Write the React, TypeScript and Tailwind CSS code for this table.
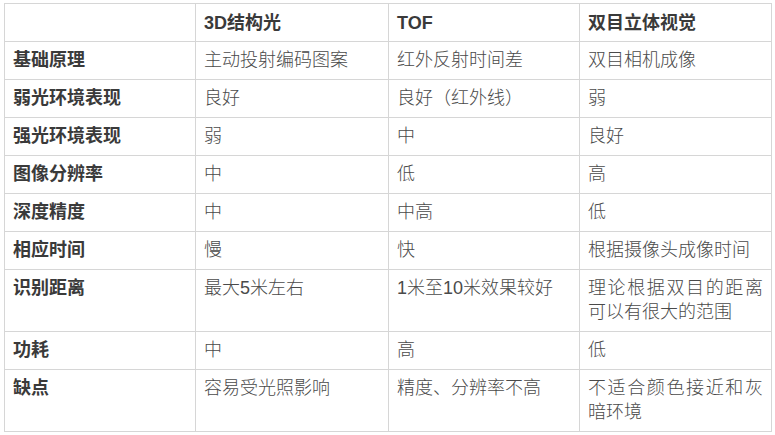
import React from "react";

const rows: [string, string, string, string][] = [
  ["基础原理", "主动投射编码图案", "红外反射时间差", "双目相机成像"],
  ["弱光环境表现", "良好", "良好（红外线）", "弱"],
  ["强光环境表现", "弱", "中", "良好"],
  ["图像分辨率", "中", "低", "高"],
  ["深度精度", "中", "中高", "低"],
  ["相应时间", "慢", "快", "根据摄像头成像时间"],
  ["识别距离", "最大5米左右", "1米至10米效果较好", "理论根据双目的距离可以有很大的范围"],
  ["功耗", "中", "高", "低"],
  ["缺点", "容易受光照影响", "精度、分辨率不高", "不适合颜色接近和灰暗环境"],
];

export default function App() {
  return (
    <div
      className="bg-white pt-[3px] pl-[4px] w-[775px] h-[435px]"
      style={{ fontFamily: '"Liberation Sans", "Noto Sans CJK SC", sans-serif' }}
    >
      <table className="table-fixed border-collapse w-[767px] text-[18px] leading-[24px]">
        <colgroup>
          <col className="w-[191px]" />
          <col className="w-[193px]" />
          <col className="w-[191px]" />
          <col className="w-[192px]" />
        </colgroup>
        <thead>
          <tr>
            <th className="border border-[#d6d6d6] px-[8px] pt-[7px] pb-[6px] text-left font-bold text-[#3a3a3a]"></th>
            <th className="border border-[#d6d6d6] px-[8px] pt-[7px] pb-[6px] text-left font-bold text-[#3a3a3a]">3D结构光</th>
            <th className="border border-[#d6d6d6] px-[8px] pt-[7px] pb-[6px] text-left font-bold text-[#3a3a3a]">TOF</th>
            <th className="border border-[#d6d6d6] px-[8px] pt-[7px] pb-[6px] text-left font-bold text-[#3a3a3a]">双目立体视觉</th>
          </tr>
        </thead>
        <tbody>
          {rows.map((r) => (
            <tr key={r[0]}>
              <td className="border border-[#d6d6d6] px-[8px] pt-[6px] pb-[7px] align-top font-bold text-[#3a3a3a]">{r[0]}</td>
              <td className="border border-[#d6d6d6] px-[8px] pt-[6px] pb-[7px] align-top text-justify font-light text-[#4a4a4a]">{r[1]}</td>
              <td className="border border-[#d6d6d6] px-[8px] pt-[6px] pb-[7px] align-top text-justify font-light text-[#4a4a4a]">{r[2]}</td>
              <td className="border border-[#d6d6d6] px-[8px] pt-[6px] pb-[7px] align-top text-justify font-light text-[#4a4a4a]">{r[3]}</td>
            </tr>
          ))}
        </tbody>
      </table>
    </div>
  );
}
